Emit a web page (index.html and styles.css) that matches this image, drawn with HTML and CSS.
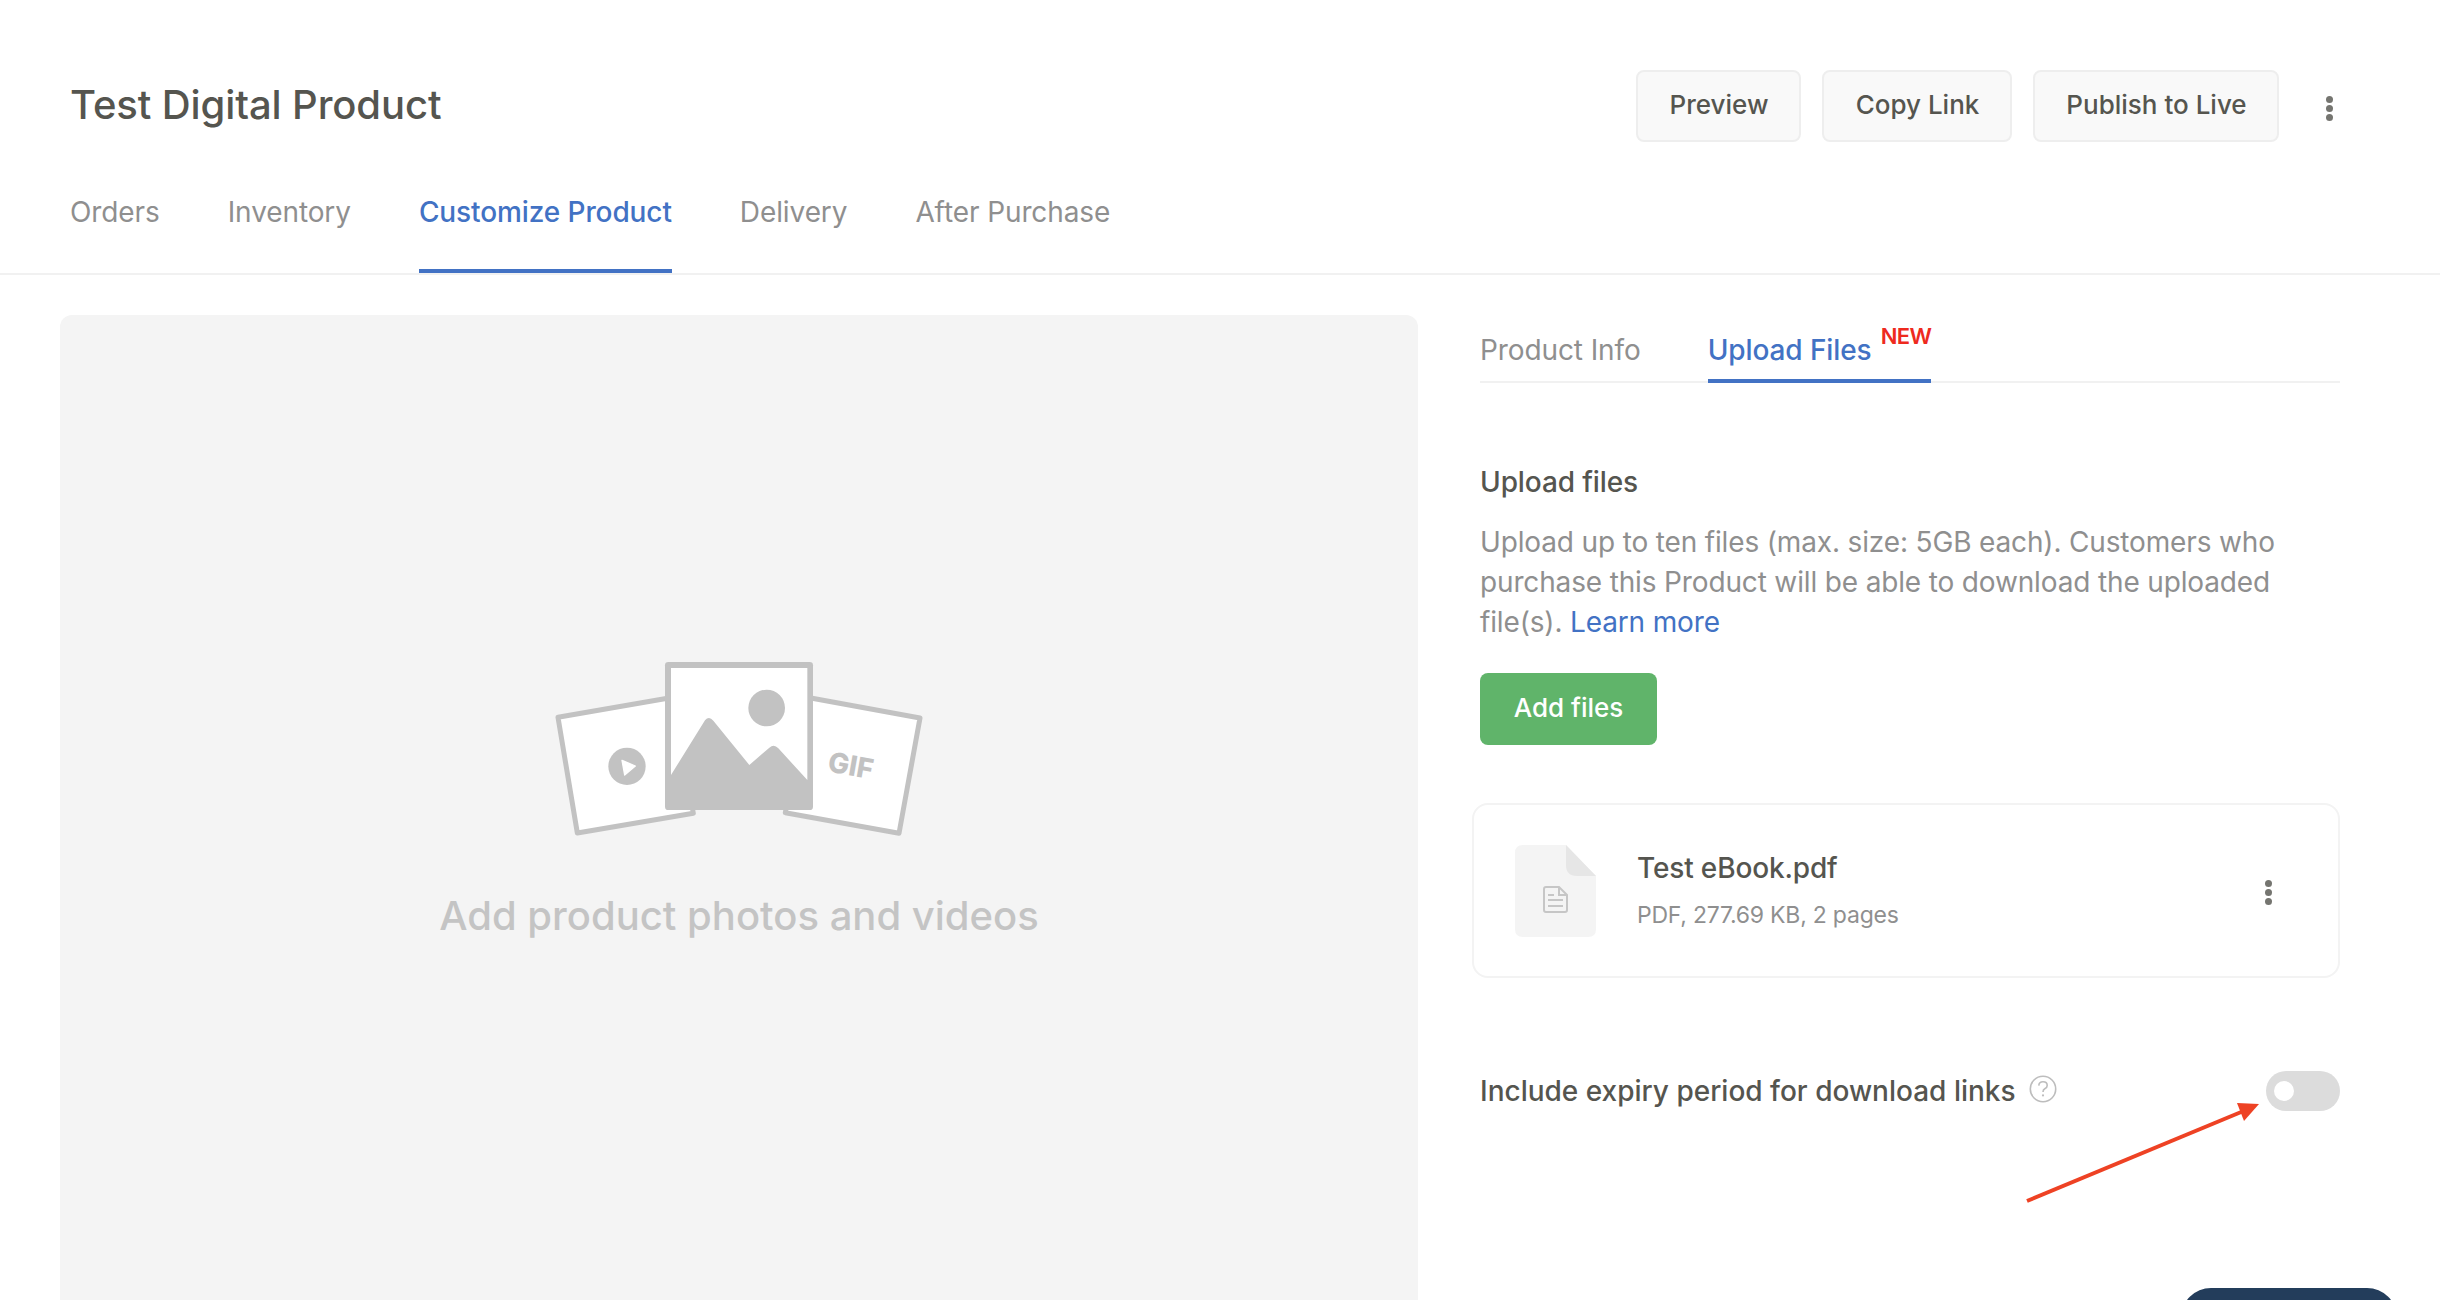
FILE: index.html
```html
<!DOCTYPE html>
<html lang="en">
<head>
<meta charset="utf-8">
<title>Test Digital Product</title>
<link rel="stylesheet" href="styles.css">
</head>
<body>
<div class="page">
  <header class="header">
    <div class="title-row">
      <h1 class="title">Test Digital Product</h1>
      <div class="actions">
        <button class="btn btn-preview">Preview</button>
        <button class="btn btn-copy">Copy Link</button>
        <button class="btn btn-publish">Publish to Live</button>
        <span class="dots dots-head"><i></i><i></i><i></i></span>
      </div>
    </div>
    <nav class="tabs">
      <a class="tab">Orders</a>
      <a class="tab">Inventory</a>
      <a class="tab active">Customize Product</a>
      <a class="tab">Delivery</a>
      <a class="tab">After Purchase</a>
    </nav>
  </header>
  <main class="main">
    <section class="media">
      <svg class="media-icon" width="420" height="220" viewBox="0 0 1260 660">
        <g fill="#fff" stroke="#c2c2c2" stroke-width="15" stroke-linejoin="round">
          <path d="M84 232 L430 172 L490 520 L142 579 Z"/>
          <path d="M1170 234 L830 172 L766 518 L1107 580 Z"/>
        </g>
        <rect x="405" y="66" width="444" height="444" rx="10" fill="#c2c2c2"/>
        <path d="M423 84 H832 V420 L745 325 Q732 310 718 323 L658 375 L550 242 Q537 226 525 241 L423 405 Z" fill="#fff"/>
        <circle cx="710" cy="204" r="55" fill="#c2c2c2"/>
        <circle cx="291" cy="379" r="56" fill="#c2c2c2"/>
        <path d="M276 361 L316 378 L284 405 Z" fill="#fff" stroke="#fff" stroke-width="4" stroke-linejoin="round"/>
        <text class="gif" transform="translate(890 394) rotate(10)">GIF</text>
      </svg>
      <p class="media-text">Add product photos and videos</p>
    </section>
    <aside class="side">
      <div class="side-tabs">
        <a class="side-tab">Product Info</a>
        <a class="side-tab active">Upload Files<sup class="new">NEW</sup></a>
      </div>
      <h2 class="heading">Upload files</h2>
      <p class="desc">Upload up to ten files (max. size: 5GB each). Customers who<br>purchase this Product will be able to download the uploaded<br>file(s). <a class="link">Learn more</a></p>
      <button class="add">Add files</button>
      <div class="file-card">
        <svg class="doc" width="81" height="92" viewBox="0 0 81 92">
          <path d="M8 0 H51 L81 31 V84 Q81 92 73 92 H8 Q0 92 0 84 V8 Q0 0 8 0 Z" fill="#f4f4f4"/>
          <path d="M51 0 L81 31 H62 Q51 31 51 20 Z" fill="#e6e6e6"/>
          <path d="M31 42 H44 L52 50 V65 Q52 67 50 67 H31 Q29 67 29 65 V44 Q29 42 31 42 Z M44 42 V50 H52" fill="none" stroke="#c6c6c6" stroke-width="2"/>
          <path d="M33 50 H39 M33 55 H48 M33 61 H48" stroke="#c6c6c6" stroke-width="2"/>
        </svg>
        <div class="file-info">
          <div class="file-name">Test eBook.pdf</div>
          <div class="file-meta">PDF, 277.69 KB, 2 pages</div>
        </div>
        <span class="dots dots-card"><i></i><i></i><i></i></span>
      </div>
      <div class="expiry">
        <span class="expiry-label">Include expiry period for download links</span>
        <svg class="help" width="28" height="28" viewBox="0 0 28 28">
          <circle cx="14" cy="14" r="12.7" fill="none" stroke="#bdbdbd" stroke-width="1.6"/>
          <path d="M9.8 10.6 Q10 6.8 14 6.8 Q18.2 6.8 18.2 10.4 Q18.2 12.6 15.8 13.8 Q14 14.8 14 17" fill="none" stroke="#bdbdbd" stroke-width="1.6"/>
          <circle cx="14" cy="20.4" r="1.1" fill="#bdbdbd"/>
        </svg>
        <span class="toggle"><span class="knob"></span></span>
      </div>
    </aside>
  </main>
  <svg class="arrow" width="250" height="110" viewBox="2020 1100 250 110">
    <path d="M2027 1201 L2246 1110" stroke="#ee4224" stroke-width="4" fill="none"/>
    <path d="M2259 1104 L2237 1103 L2244 1121 Z" fill="#ee4224"/>
  </svg>
  <div class="fab"></div>
</div>
</body>
</html>
```
FILE: styles.css
```css
* { box-sizing: border-box; }
html, body { margin: 0; padding: 0; background: #fff; }
body { font-family: Inter, "Noto Sans", sans-serif; color: #55554f; }
.page { position: relative; width: 2440px; height: 1300px; overflow: hidden; }

.header { height: 275px; border-bottom: 2px solid #f1f1f1; padding: 70px 0 0 70px; }
.title-row { display: flex; justify-content: space-between; align-items: center; height: 72px; padding-right: 107px; }
.title { margin: 0 0 3px; font-size: 40px; font-weight: 500; color: #55554f; letter-spacing: -0.1px; }
.actions { display: flex; align-items: center; }
.btn { height: 72px; border: 2px solid #eeeeee; border-radius: 8px; background: #f9f9f9; color: #55554f; font: 500 26px Inter, sans-serif; margin-right: 21px; padding: 0 0 3px 1px; }
.btn-preview { width: 165px; }
.btn-copy { width: 190px; }
.btn-publish { width: 246px; margin-right: 47px; }
.dots { display: flex; flex-direction: column; gap: 2px; width: 7px; }
.dots i { display: block; width: 7px; height: 7px; border-radius: 50%; background: #757570; }
.dots-head { margin-top: 4px; }
.dots-card { margin-top: 4px; }

.tabs { display: flex; gap: 68px; margin-top: 53px; height: 78px; }
.tab { font-size: 28px; line-height: 34px; color: #8f8f8f; height: 78px; letter-spacing: -0.1px; }
.tab.active { color: #4272c4; font-weight: 500; border-bottom: 4px solid #4272c4; }

.main { display: flex; padding: 40px 0 0 60px; height: 1025px; }
.media { width: 1358px; height: 1100px; background: #f4f4f4; border-radius: 12px; display: flex; flex-direction: column; align-items: center; padding-top: 325px; }
.media-icon { display: block; margin-left: 2px; }
.media-text { margin: 32px 0 0; font-size: 40px; font-weight: 500; color: #c4c4c4; line-height: 48px; }
.gif { font: 800 84px Inter, sans-serif; fill: #c2c2c2; stroke: none; }

.side { width: 860px; margin-left: 62px; }
.side-tabs { display: flex; gap: 67px; height: 68px; border-bottom: 2px solid #f1f1f1; }
.side-tab { font-size: 28px; line-height: 34px; color: #8f8f8f; padding-top: 18px; height: 68px; letter-spacing: -0.1px; }
.side-tab.active { color: #4272c4; font-weight: 500; border-bottom: 4px solid #4272c4; position: relative; width: 223px; }
.new { position: absolute; left: 173px; top: 8px; font-size: 22px; line-height: 26px; font-weight: 600; color: #ee2a1e; vertical-align: baseline; letter-spacing: -0.6px; }
.heading { margin: 82px 0 0; font-size: 28px; font-weight: 500; line-height: 34px; color: #55554f; letter-spacing: -0.1px; }
.desc { margin: 23px 0 0; font-size: 28px; line-height: 40px; color: #8f8f8f; letter-spacing: -0.15px; }
.link { color: #4272c4; }
.add { display: block; margin-top: 31px; width: 177px; height: 72px; background: #60b46a; color: #fff; border: 0; border-radius: 8px; font: 500 26px Inter, sans-serif; padding: 0 0 3px; }
.file-card { display: flex; align-items: center; margin: 58px 0 0 -8px; width: 868px; height: 175px; border: 2px solid #f3f3f3; border-radius: 16px; padding-left: 41px; padding-right: 66px; }
.file-info { flex: 1; margin-left: 41px; }
.file-name { font-size: 28px; font-weight: 500; line-height: 34px; color: #55554f; letter-spacing: -0.15px; margin-top: -1px; }
.file-meta { font-size: 23px; line-height: 30px; color: #8f8f8f; margin-top: 15px; letter-spacing: -0.22px; }
.expiry { display: flex; align-items: center; margin-top: 93px; height: 40px; }
.expiry-label { font-size: 28px; font-weight: 500; color: #55554f; margin-bottom: 1px; }
.help { margin-left: 13px; margin-top: -4px; }
.toggle { margin-left: auto; width: 74px; height: 40px; background: #dcdcdc; border-radius: 20px; padding: 10px 8px; }
.knob { display: block; width: 20px; height: 20px; border-radius: 50%; background: #fff; }
.arrow { position: absolute; left: 2020px; top: 1100px; }
.fab { position: absolute; left: 2181px; top: 1288px; width: 216px; height: 72px; background: #233d5b; border-radius: 30px; }
```
